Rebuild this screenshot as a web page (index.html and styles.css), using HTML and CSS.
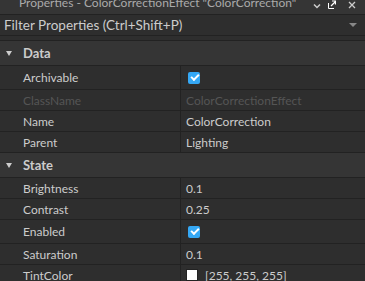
FILE: index.html
```html
<!DOCTYPE html>
<html>
<head>
    <meta charset="utf-8">
    <link rel="stylesheet" href="styles.css">
</head>
<body>
    <div class="panel">
        <div class="title-bar">
            <span class="title">Properties - ColorCorrectionEffect "ColorCorrection"</span>
            <div class="title-icons">
                <svg class="icon-chevron" width="8" height="8" viewBox="0 0 8 8"><path d="M1 2.5 L4 5.5 L7 2.5" fill="none" stroke="#cccccc" stroke-width="1.5"/></svg>
                <svg class="icon-popout" width="8" height="9" viewBox="0 0 8 9"><path d="M0.5 3 V8.5 H6" fill="none" stroke="#ffffff" stroke-width="1"/><path d="M3 6 L7.5 1.5 M4 1 H7.5 V4.5" fill="none" stroke="#ffffff" stroke-width="1.2"/></svg>
                <svg class="icon-close" width="8" height="8" viewBox="0 0 8 8"><path d="M1 1 L7 7 M7 1 L1 7" fill="none" stroke="#cccccc" stroke-width="1.3"/></svg>
            </div>
        </div>

        <div class="filter-bar">
            <span>Filter Properties (Ctrl+Shift+P)</span>
            <span class="drop-arrow"></span>
        </div>
        <div class="spacer"></div>

        <!-- Data section -->
        <div class="section-header"><span class="caret"></span>Data</div>
        <div class="prop-row tall">
            <div class="prop-name">Archivable</div>
            <div class="prop-value"><span class="checkbox"></span></div>
        </div>
        <div class="prop-row disabled">
            <div class="prop-name">ClassName</div>
            <div class="prop-value">ColorCorrectionEffect</div>
        </div>
        <div class="prop-row">
            <div class="prop-name">Name</div>
            <div class="prop-value">ColorCorrection</div>
        </div>
        <div class="prop-row">
            <div class="prop-name">Parent</div>
            <div class="prop-value">Lighting</div>
        </div>

        <!-- State section -->
        <div class="section-header"><span class="caret"></span>State</div>
        <div class="prop-row">
            <div class="prop-name">Brightness</div>
            <div class="prop-value">0.1</div>
        </div>
        <div class="prop-row">
            <div class="prop-name">Contrast</div>
            <div class="prop-value">0.25</div>
        </div>
        <div class="prop-row tall">
            <div class="prop-name">Enabled</div>
            <div class="prop-value"><span class="checkbox"></span></div>
        </div>
        <div class="prop-row">
            <div class="prop-name">Saturation</div>
            <div class="prop-value">0.1</div>
        </div>
        <div class="prop-row">
            <div class="prop-name">TintColor</div>
            <div class="prop-value"><span class="swatch"></span>[255, 255, 255]</div>
        </div>
    </div>
</body>
</html>
```

FILE: styles.css
```css
* {
    margin: 0;
    padding: 0;
    box-sizing: border-box;
}

html, body {
    width: 100%;
    height: 100%;
    overflow: hidden;
    background: #2e2e2e;
}

.panel {
    font-family: Lato, "Noto Sans", sans-serif;
    font-size: 12px;
    color: #cccccc;
}

.title-bar {
    height: 15px;
    background: #353535;
    border-bottom: 1px solid #222222;
    display: flex;
    justify-content: space-between;
    overflow: hidden;
}

.title {
    padding-left: 19px;
    line-height: 12px;
    margin-top: -3px;
    color: #aaaaaa;
    white-space: nowrap;
}

.title-icons {
    display: flex;
    align-items: flex-start;
    padding-right: 9px;
    padding-top: 1px;
}

.icon-chevron {
    margin-top: 1px;
}

.icon-popout {
    margin-left: 7px;
    margin-top: -1px;
}

.icon-close {
    margin-left: 12px;
}

.filter-bar {
    height: 21px;
    padding: 0 4px;
    font-size: 13.5px;
    background: #2e2e2e;
    border-bottom: 1px solid #222222;
    display: flex;
    align-items: center;
    justify-content: space-between;
}

.drop-arrow {
    width: 0;
    height: 0;
    margin-right: 4px;
    border-left: 4px solid transparent;
    border-right: 4px solid transparent;
    border-top: 4px solid #888888;
}

.spacer {
    height: 5px;
    border-bottom: 1px solid #222222;
}

.section-header {
    height: 25px;
    background: #353535;
    border-bottom: 1px solid #222222;
    display: flex;
    align-items: center;
    font-size: 13px;
    font-weight: bold;
    padding-left: 6px;
}

.caret {
    width: 0;
    height: 0;
    margin-right: 11px;
    border-left: 3.5px solid transparent;
    border-right: 3.5px solid transparent;
    border-top: 5px solid #cccccc;
}

.prop-row {
    height: 21px;
    display: grid;
    grid-template-columns: 181px 1fr;
    border-bottom: 1px solid #222222;
}

.prop-row.tall {
    height: 24px;
}

.prop-name {
    padding-left: 23px;
    border-right: 1px solid #222222;
    display: flex;
    align-items: center;
}

.prop-value {
    padding-left: 5px;
    display: flex;
    align-items: center;
}

.prop-row.disabled {
    color: #555555;
}

.checkbox {
    width: 12px;
    height: 12px;
    margin-left: 2px;
    border-radius: 2px;
    background: #35a8f5;
    position: relative;
}

.checkbox::after {
    content: "";
    position: absolute;
    left: 3px;
    top: 2px;
    width: 6px;
    height: 3px;
    border-left: 2px solid #ffffff;
    border-bottom: 2px solid #ffffff;
    transform: rotate(-45deg);
}

.swatch {
    width: 12px;
    height: 12px;
    background: #ffffff;
    border: 1px solid #222222;
    margin-right: 7px;
}
```
